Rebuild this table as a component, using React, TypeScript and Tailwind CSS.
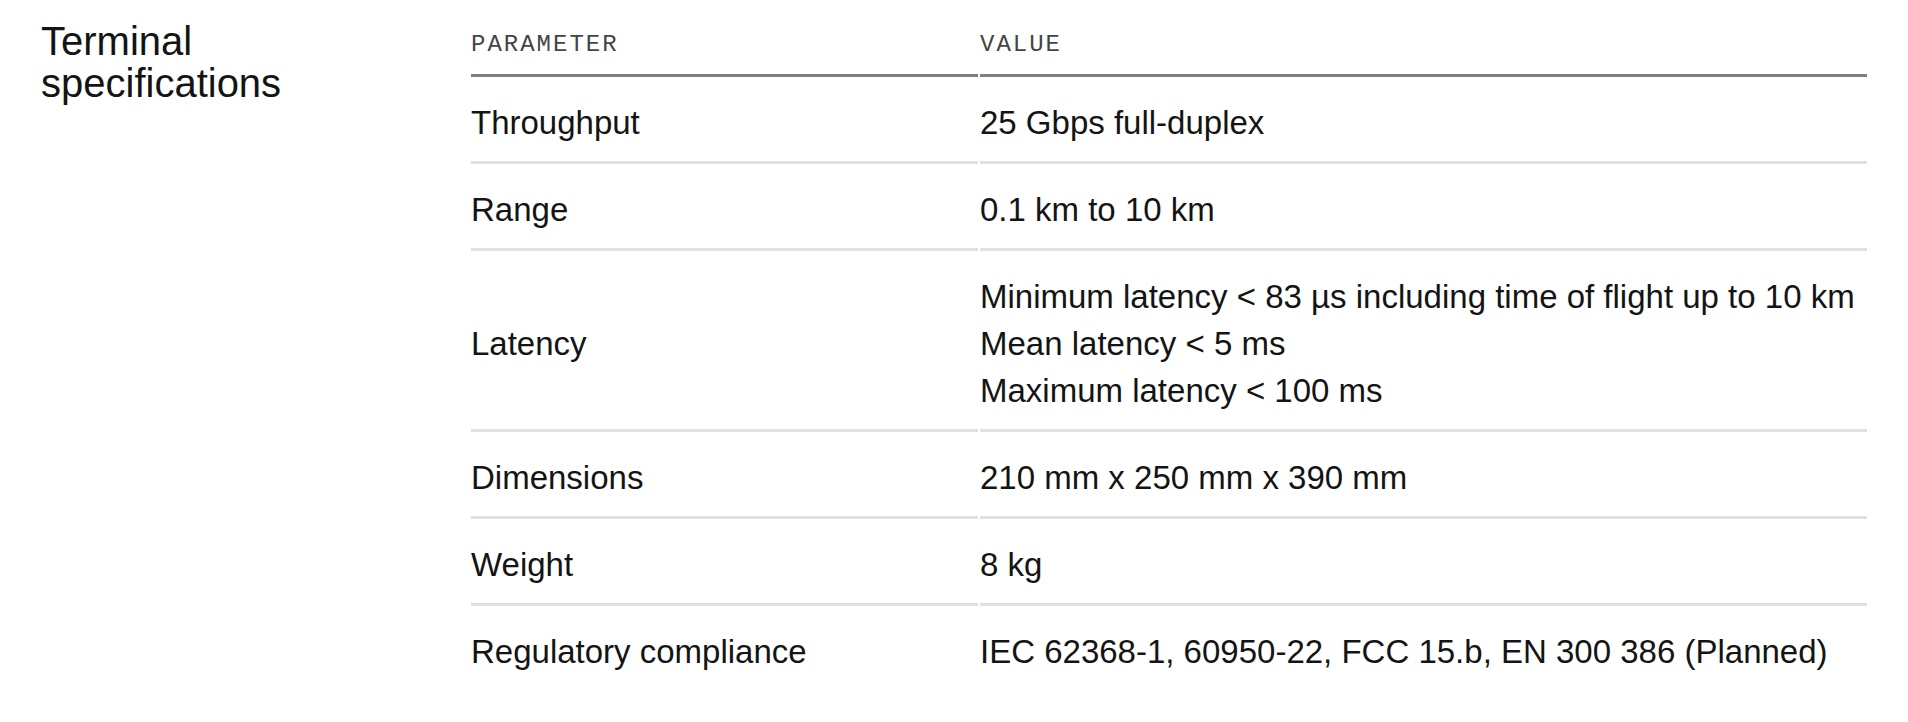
import React from 'react';

interface SpecRow {
  label: string;
  values: string[];
}

const specs: SpecRow[] = [
  { label: 'Throughput', values: ['25 Gbps full-duplex'] },
  { label: 'Range', values: ['0.1 km to 10 km'] },
  {
    label: 'Latency',
    values: [
      'Minimum latency < 83 µs including time of flight up to 10 km',
      'Mean latency < 5 ms',
      'Maximum latency < 100 ms',
    ],
  },
  { label: 'Dimensions', values: ['210 mm x 250 mm x 390 mm'] },
  { label: 'Weight', values: ['8 kg'] },
  { label: 'Regulatory compliance', values: ['IEC 62368-1, 60950-22, FCC 15.b, EN 300 386 (Planned)'] },
];

function HeaderCell({ children }: { children: React.ReactNode }) {
  return (
    <div className="pt-[13px] pb-[17px] border-b-[3px] border-[#808080] font-['Liberation_Mono',monospace] text-[24px] leading-[24px] tracking-[2px] uppercase text-[#444444]">
      {children}
    </div>
  );
}

export default function App() {
  return (
    <div className="min-h-screen bg-white flex px-[41px] pt-[20px] font-['Liberation_Sans',Arial,sans-serif] text-[#141414]">
      {/* section title */}
      <div className="w-[430px] shrink-0">
        <h2 className="text-[40px] leading-[42px] font-normal">
          Terminal
          <br />
          specifications
        </h2>
      </div>

      {/* spec table */}
      <div className="flex-1">
        <div className="grid grid-cols-[507px_1fr] gap-x-[2px]">
          <HeaderCell>Parameter</HeaderCell>
          <HeaderCell>Value</HeaderCell>

          {specs.map((row, i) => {
            const last = i === specs.length - 1;
            const border = last ? '' : 'border-b-[3px] border-[#e0e0e0]';
            return (
              <React.Fragment key={row.label}>
                <div className={`flex items-center pt-[22px] pb-[15px] text-[33px] leading-[47px] ${border}`}>
                  {row.label}
                </div>
                <div className={`pt-[22px] pb-[15px] text-[33px] leading-[47px] whitespace-nowrap ${border}`}>
                  {row.values.map((v) => (
                    <div key={v}>{v}</div>
                  ))}
                </div>
              </React.Fragment>
            );
          })}
        </div>
      </div>
    </div>
  );
}
